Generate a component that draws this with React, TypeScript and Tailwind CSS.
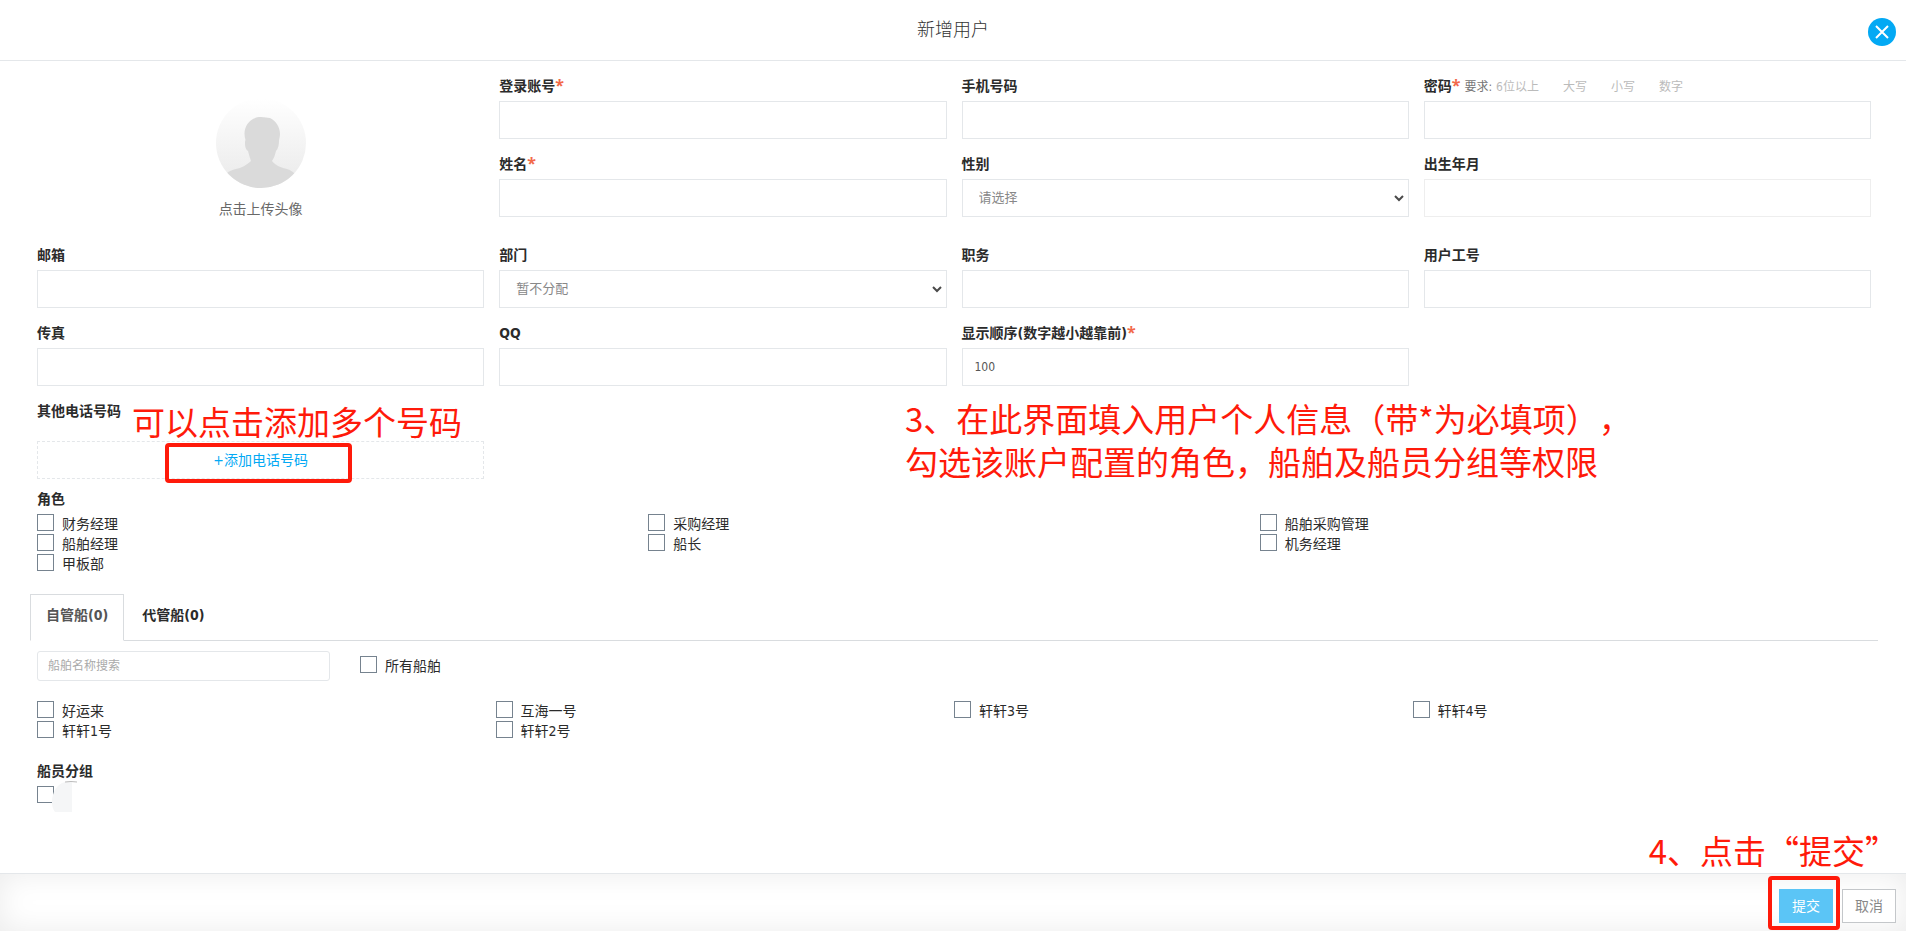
import { useState } from 'react'
import type { ReactNode } from 'react'

type FieldProps = {
  id: string
  label: string
  required?: boolean
  hint?: ReactNode
  children: ReactNode
}

const roles = ['财务经理', '采购经理', '船舶采购管理', '船舶经理', '船长', '机务经理', '甲板部']
const ships = ['好运来', '互海一号', '轩轩3号', '轩轩4号', '轩轩1号', '轩轩2号']

const inputClass = 'block h-[38px] w-full border border-[#e4e7ea] bg-white px-3 text-xs text-[#565656] outline-none'
const labelClass = 'text-sm leading-5 font-bold text-[#2b2b2b]'
const noteClass = 'pointer-events-none absolute whitespace-nowrap font-["Noto_Sans_CJK_SC",sans-serif] text-[33px] leading-[43px] text-[#ff1a0a] [text-spacing-trim:space-all]'

function Field({ id, label, required, hint, children }: FieldProps) {
  return (
    <div>
      <div className="mb-[5px] flex h-5 items-center">
        <label htmlFor={id} className={labelClass}>
          {label}
          {required && <span className='font-["Noto_Sans",sans-serif] text-base leading-none text-[#f2694a]'>*</span>}
        </label>
        {hint}
      </div>
      {children}
    </div>
  )
}

function Select({ id, options }: { id: string; options: string[] }) {
  return (
    <div className="relative">
      <select
        id={id}
        className="block h-[38px] w-full appearance-none border border-[#e4e7ea] bg-white px-4 text-[13px] text-[#888888] outline-none"
      >
        {options.map((option) => (
          <option key={option}>{option}</option>
        ))}
      </select>
      <svg
        viewBox="0 0 10 8"
        className="pointer-events-none absolute top-[15px] right-[5px] h-2 w-2.5"
        fill="none"
        stroke="#4a4a4a"
        strokeWidth="2"
        aria-hidden="true"
      >
        <path d="M1 2l4 4 4-4" />
      </svg>
    </div>
  )
}

function Check({ label }: { label: string }) {
  return (
    <label className="flex h-5 items-start gap-2 text-sm leading-5 text-[#2b2b2b]">
      <input type="checkbox" className="size-[17px] shrink-0 appearance-none border border-[#76838f] bg-white checked:bg-[#03a9f4]" />
      <span>{label}</span>
    </label>
  )
}

function Avatar() {
  return (
    <svg viewBox="0 0 90 90" className="size-[90px]" aria-hidden="true">
      <defs>
        <linearGradient id="avatar-bg" x1="0" y1="0" x2="0" y2="1">
          <stop offset="0" stopColor="#ffffff" />
          <stop offset="1" stopColor="#e9e9e9" />
        </linearGradient>
        <clipPath id="avatar-clip">
          <circle cx="45" cy="45" r="45" />
        </clipPath>
      </defs>
      <g clipPath="url(#avatar-clip)">
        <rect width="90" height="90" fill="url(#avatar-bg)" />
        <path
          d="M45 19c4 0 6 1 9 1 6 3 10 9 10 16 0 3-1 5-1 7 0 4-1 8-3 10-1 4-2 7-4 10 4 5 10 7 15 8 4 1 6 3 8 5v15H11V75c2-2 5-3 9-4 5-1 11-4 15-8-1-3-2-6-3-10-2-1-3-4-3-7 0-2 0-3 .5-4-.5-2-1-4-1-6 0-9 6-17 16.500-17z"
          fill="#dadada"
        />
      </g>
    </svg>
  )
}

export default function App() {
  const [tab, setTab] = useState('own')
  const [order, setOrder] = useState('100')

  const tabs = [
    { key: 'own', label: '自管船(0)' },
    { key: 'managed', label: '代管船(0)' },
  ]

  return (
    <div lang="zh-CN" className='flex min-h-screen flex-col bg-white font-["DejaVu_Sans_Condensed","Noto_Sans","Noto_Sans_CJK_SC",sans-serif]'>
      <header className="relative flex h-[61px] items-center justify-center border-b border-[#e4e7ea]">
        <h1 className="text-lg font-light text-[#333333]">新增用户</h1>
        <button
          type="button"
          aria-label="关闭"
          className="absolute top-[18px] right-[10px] flex size-7 items-center justify-center rounded-full bg-[#03a9f4]"
        >
          <svg viewBox="0 0 14 14" className="size-3.5" fill="none" stroke="#ffffff" strokeWidth="2" aria-hidden="true">
            <path d="M1 1l12 12M13 1L1 13" />
          </svg>
        </button>
      </header>

      <main className="flex-1 pt-[15px] pr-[35px] pb-[67px] pl-[37px]">
        <div className="grid grid-cols-4 gap-[15px]">
          <button type="button" className="row-span-2 flex flex-col items-center gap-[13px] pt-[22px]">
            <Avatar />
            <span className="text-sm leading-4 text-[#686868]">点击上传头像</span>
          </button>
          <Field id="account" label="登录账号" required>
            <input id="account" type="text" className={inputClass} />
          </Field>
          <Field id="mobile" label="手机号码">
            <input id="mobile" type="text" className={inputClass} />
          </Field>
          <Field
            id="password"
            label="密码"
            required
            hint={
              <div className="ml-1 flex pt-0.5 text-xs leading-5 text-[#bbbbbb]">
                <span className="mr-1 text-[#777777]">要求:</span>
                <span className="mr-6">6位以上</span>
                <span className="mr-6">大写</span>
                <span className="mr-6">小写</span>
                <span>数字</span>
              </div>
            }
          >
            <input id="password" type="password" className={inputClass} />
          </Field>
          <Field id="name" label="姓名" required>
            <input id="name" type="text" className={inputClass} />
          </Field>
          <Field id="gender" label="性别">
            <Select id="gender" options={['请选择']} />
          </Field>
          <Field id="birthday" label="出生年月">
            <input id="birthday" type="text" readOnly className="block h-[38px] w-full border border-[#eeeeee] bg-white px-3 text-xs outline-none" />
          </Field>
        </div>

        <div className="mt-7 grid grid-cols-4 gap-[15px]">
          <Field id="email" label="邮箱">
            <input id="email" type="text" className={inputClass} />
          </Field>
          <Field id="department" label="部门">
            <Select id="department" options={['暂不分配']} />
          </Field>
          <Field id="job" label="职务">
            <input id="job" type="text" className={inputClass} />
          </Field>
          <Field id="staff-no" label="用户工号">
            <input id="staff-no" type="text" className={inputClass} />
          </Field>
          <Field id="fax" label="传真">
            <input id="fax" type="text" className={inputClass} />
          </Field>
          <Field id="qq" label="QQ">
            <input id="qq" type="text" className={inputClass} />
          </Field>
          <Field id="order" label="显示顺序(数字越小越靠前)" required>
            <input id="order" type="text" value={order} onChange={(e) => setOrder(e.target.value)} className={inputClass} />
          </Field>
        </div>

        <div className="relative mt-[15px] grid grid-cols-4 gap-[15px]">
          <div>
            <h2 className={labelClass}>其他电话号码</h2>
            <div className="relative mt-5">
              <button type="button" className="block h-[38px] w-full border border-dashed border-[#e4e7ea] text-sm text-[#03a9f4]">
                +添加电话号码
              </button>
              <div className="pointer-events-none absolute top-[2px] left-[128px] h-10 w-[187px] rounded border-4 border-[#ff1a0a]" />
            </div>
          </div>
          <p className={`${noteClass} -top-px left-[95px]`}>可以点击添加多个号码</p>
          <p className={`${noteClass} -top-1 left-[868px]`}>
            3、在此界面填入用户个人信息（带*为必填项），
            <br />
            勾选该账户配置的角色，船舶及船员分组等权限
          </p>
        </div>

        <section className="mt-[10px]">
          <h2 className={labelClass}>角色</h2>
          <div className="mt-[5px] grid grid-cols-3">
            {roles.map((role) => (
              <Check key={role} label={role} />
            ))}
          </div>
        </section>

        <section className="mt-5">
          <div role="tablist" className="-mr-[7px] -ml-[7px] flex gap-[2px] border-b border-[#d9dcdf]">
            {tabs.map((item) => (
              <button
                key={item.key}
                type="button"
                role="tab"
                aria-selected={tab === item.key}
                onClick={() => setTab(item.key)}
                className={
                  tab === item.key
                    ? '-mb-px h-[47px] border border-b-white border-[#d9dcdf] bg-white px-[15px] pb-1.5 text-sm font-bold text-[#555555]'
                    : '-mb-px h-[47px] border border-transparent px-[15px] pb-1.5 text-sm font-bold text-[#2b2b2b]'
                }
              >
                {item.label}
              </button>
            ))}
          </div>
          <div className="mt-[10px] flex items-center gap-[30px]">
            <input
              type="text"
              aria-label="船舶名称搜索"
              placeholder="船舶名称搜索"
              className="h-[30px] w-[293px] rounded-[3px] border border-[#e4e7ea] px-[10px] text-xs outline-none placeholder:text-[#aaaaaa]"
            />
            <Check label="所有船舶" />
          </div>
          <div className="mt-5 grid grid-cols-4">
            {ships.map((ship) => (
              <Check key={ship} label={ship} />
            ))}
          </div>
        </section>

        <section className="mt-5">
          <h2 className={labelClass}>船员分组</h2>
          <div className="relative mt-[5px] h-5">
            <input
              type="checkbox"
              aria-label="船员分组"
              className="block size-[17px] appearance-none border border-[#76838f] bg-white"
            />
            <svg viewBox="0 0 28 32" className="absolute -top-[5px] left-[14px] h-8 w-7" aria-hidden="true">
              <path d="M21 0v31H4C-1 25 0 11 8 4 12 1 16 0 21 0z" fill="#f5f6f7" />
              <path d="M14 1q6-1 12 0" stroke="#bbbbbb" fill="none" />
            </svg>
          </div>
        </section>
      </main>

      <footer className="relative flex h-[58px] items-start justify-end gap-[9px] border-t border-[#e4e7ea] bg-white pt-[15px] pr-[10px] shadow-[inset_0_0_30px_rgba(0,0,0,0.08)]">
        <button type="button" className="h-[34px] w-[54px] bg-[#5bc5f6] text-sm text-white">提交</button>
        <button type="button" className="h-[34px] w-[54px] border border-[#c4c7ca] bg-white text-sm text-[#888888]">取消</button>
        <div className="pointer-events-none absolute top-[2px] right-[66px] h-[54px] w-[72px] rounded border-4 border-[#ff1a0a]" />
        <p className={`${noteClass} -top-[45px] right-2`}>4、点击“提交”</p>
      </footer>
    </div>
  )
}
